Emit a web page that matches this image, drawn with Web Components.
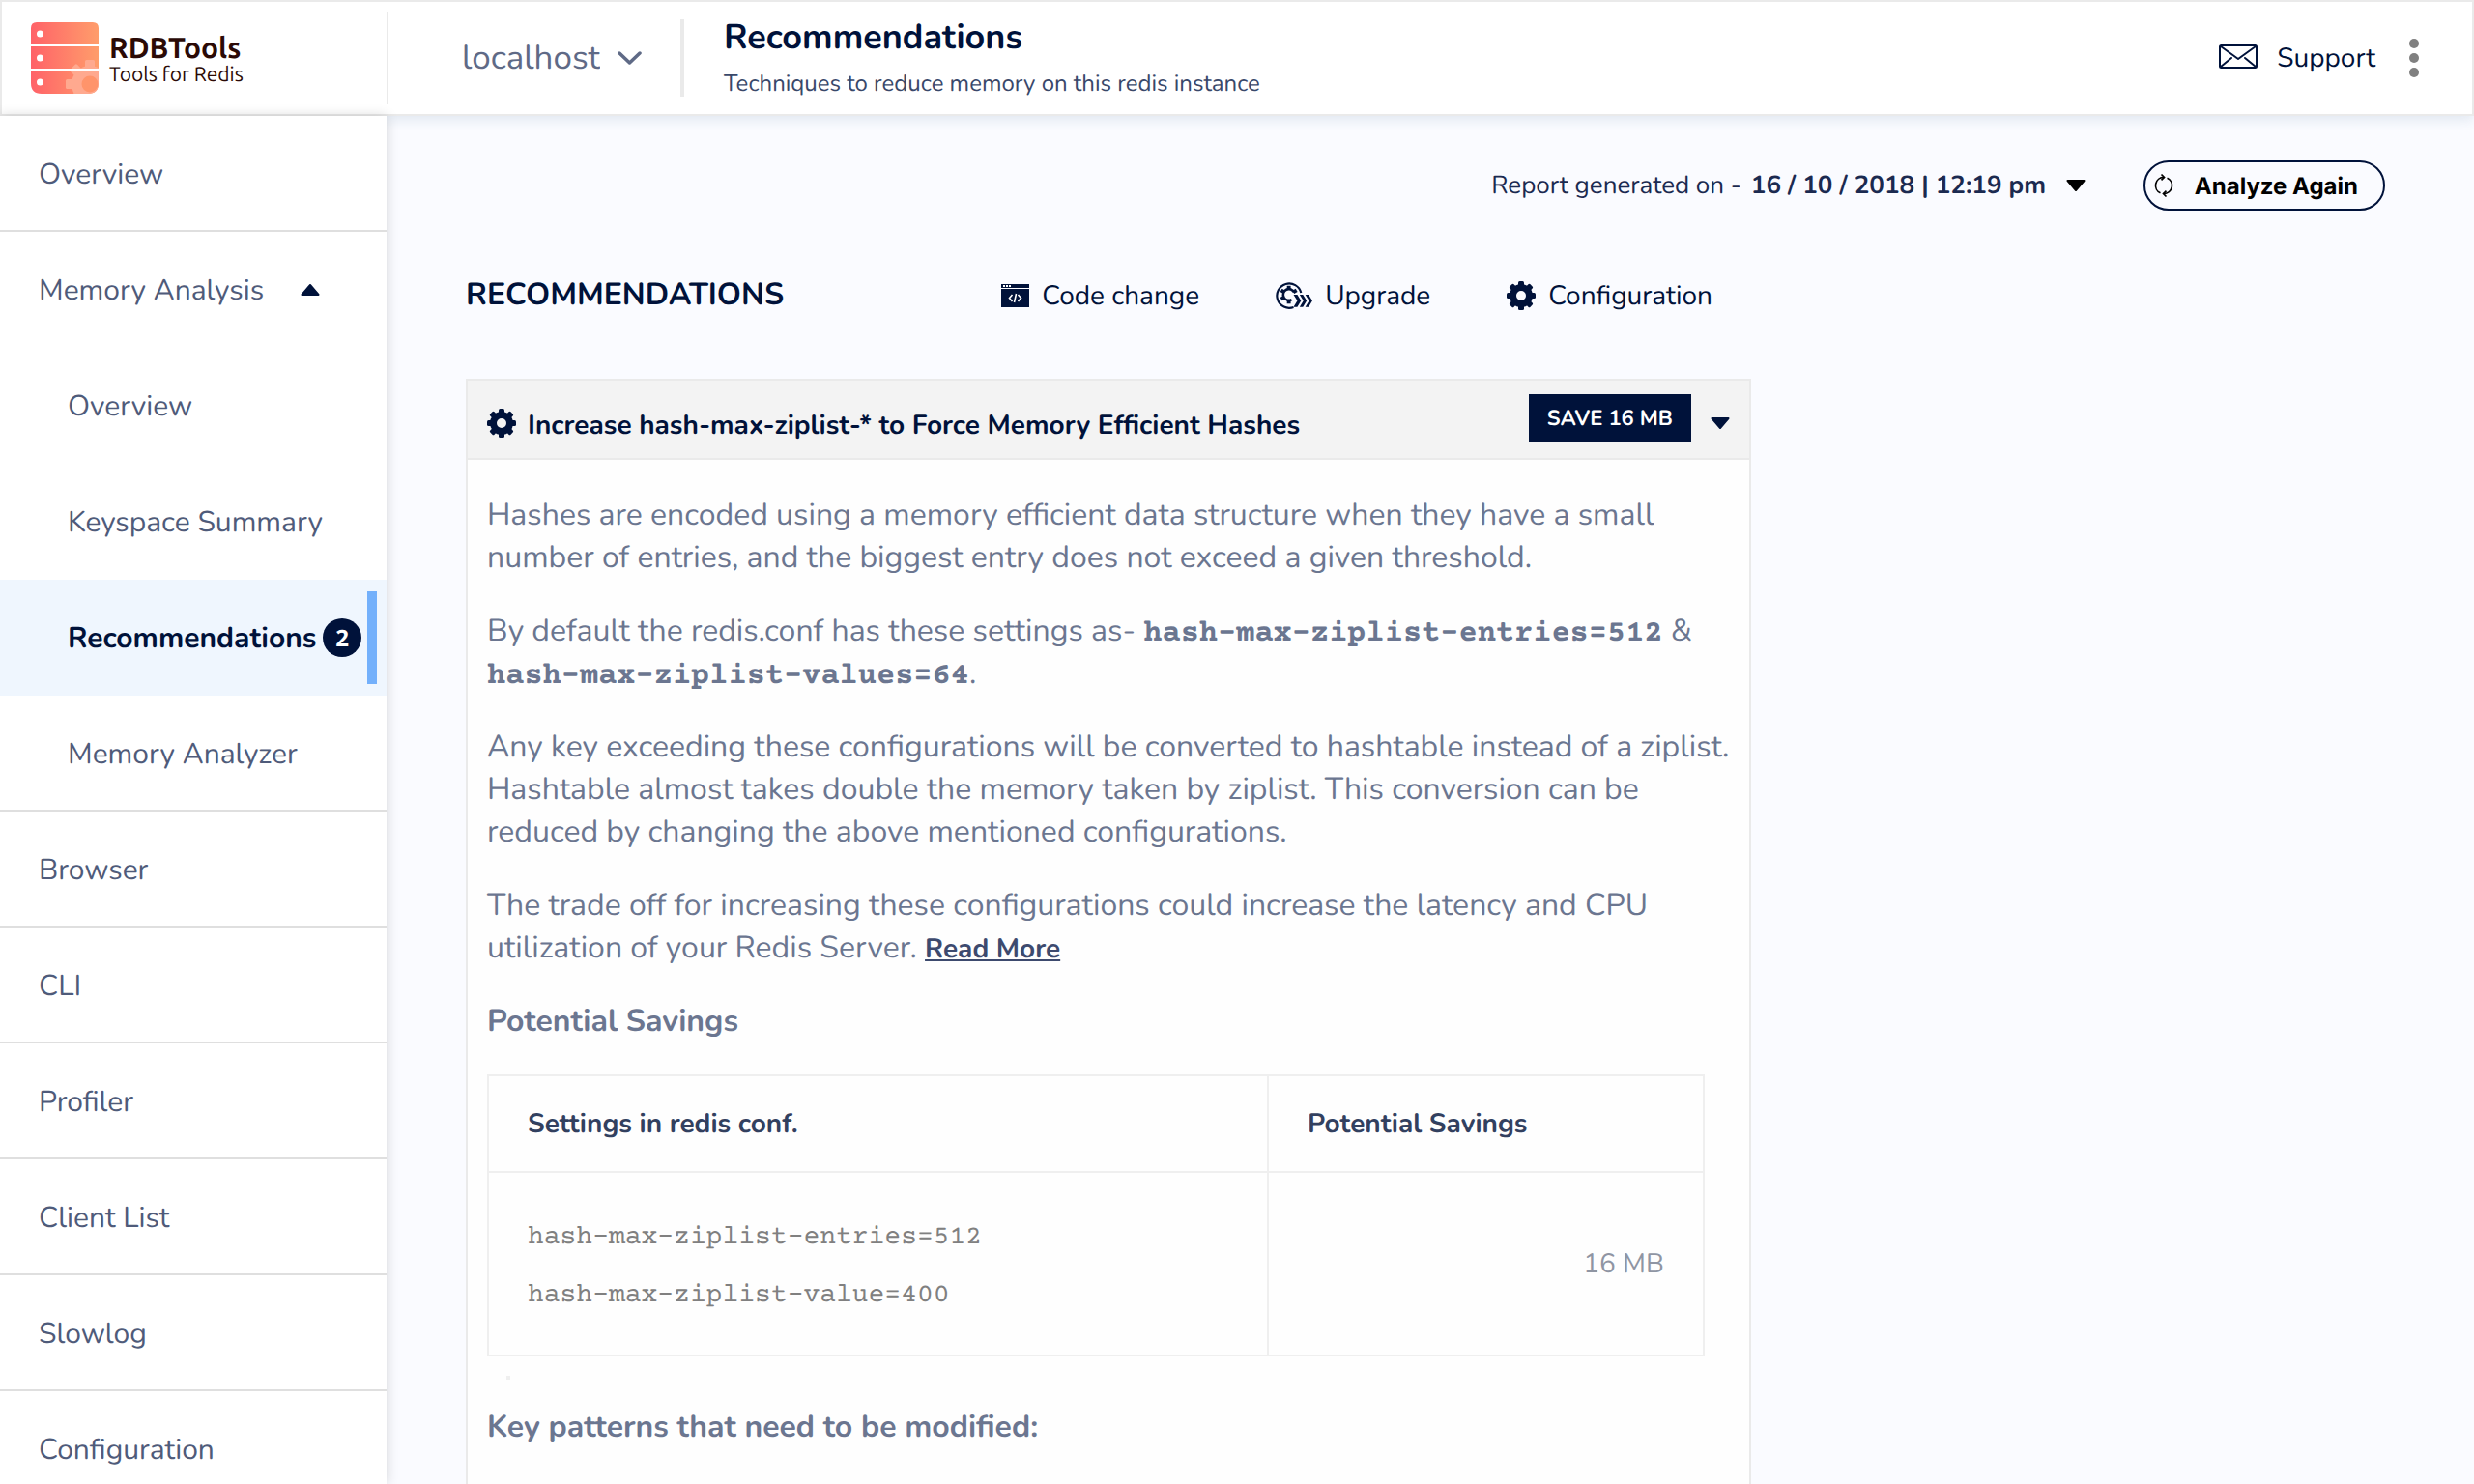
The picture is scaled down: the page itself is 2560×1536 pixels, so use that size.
<!DOCTYPE html>
<html lang="en">
<head>
<meta charset="utf-8">
<title>RDBTools - Recommendations</title>
<style>
  html, body { margin: 0; height: 100%; }
  body {
    --ink: #00123a;
    --text: #6b7690;
    --nav: #4f5b7a;
    --line: #eaeaea;
    --mono: "Courier Prime", "Nimbus Mono PS", "Liberation Mono", monospace;
    font-family: Nunito, Lato, sans-serif;
    font-size: 28px;
    text-rendering: geometricPrecision;
    color: var(--ink);
    background: #fafbff;
    overflow: hidden;
  }
</style>
</head>
<body>
<rdb-app>
  <rdb-header slot="header"></rdb-header>
  <rdb-sidebar slot="sidebar">
    <nav-item>Overview</nav-item>
    <nav-item expanded>Memory Analysis</nav-item>
    <nav-item sub>Overview</nav-item>
    <nav-item sub>Keyspace Summary</nav-item>
    <nav-item sub active count="2">Recommendations</nav-item>
    <nav-item sub last>Memory Analyzer</nav-item>
    <nav-item>Browser</nav-item>
    <nav-item>CLI</nav-item>
    <nav-item>Profiler</nav-item>
    <nav-item>Client List</nav-item>
    <nav-item>Slowlog</nav-item>
    <nav-item>Configuration</nav-item>
  </rdb-sidebar>
  <report-bar></report-bar>
  <page-heading>
    RECOMMENDATIONS
    <legend-item slot="legend" icon="code">Code change</legend-item>
    <legend-item slot="legend" icon="upgrade">Upgrade</legend-item>
    <legend-item slot="legend" icon="gear">Configuration</legend-item>
  </page-heading>
  <recommendation-card heading="Increase hash-max-ziplist-* to Force Memory Efficient Hashes" saving="SAVE 16 MB">
    <recommendation-text></recommendation-text>
    <savings-table></savings-table>
    <card-subtitle>Key patterns that need to be modified:</card-subtitle>
  </recommendation-card>
</rdb-app>

<script>
const teeth = (n, w, from, to) => Array.from({ length: n }, (_, i) =>
  `<rect x="${-w / 2}" y="${-to}" width="${w}" height="${to - from}" rx="1.5" transform="rotate(${i * 360 / n})"/>`).join('');

const ICONS = {
  gear: `<svg width="30" height="30" viewBox="-15 -15 30 30" fill="currentColor" aria-hidden="true">${teeth(8, 6, 9, 15)}<circle r="8.5" fill="none" stroke="currentColor" stroke-width="7"/></svg>`,
  code: `<svg width="29" height="24" viewBox="0 0 29 24" fill="currentColor" aria-hidden="true">
    <path d="M0 0h29v4H0zM0 5h29v19H0z"/>
    <g fill="#fff"><rect x="2" y="1" width="2" height="2"/><rect x="5" y="1" width="2" height="2"/><rect x="8" y="1" width="2" height="2"/></g>
    <path d="M11.500 11l-3 3.500 3 3.500M17.500 11l3 3.500-3 3.500M15.500 10l-2 9" fill="none" stroke="#fff" stroke-width="1.600"/></svg>`,
  upgrade: `<svg width="38" height="30" viewBox="0 0 39 30" aria-hidden="true">
    <path d="M27 12A13 13 0 1 0 19 27.300" fill="none" stroke="currentColor" stroke-width="2.200"/>
    <g transform="translate(14 14)"><g fill="currentColor">
      <rect x="-2" y="-9.500" width="4" height="4"/><rect x="-2" y="-9.500" width="4" height="4" transform="rotate(-60)"/><rect x="-2" y="-9.500" width="4" height="4" transform="rotate(-120)"/><rect x="-2" y="-9.500" width="4" height="4" transform="rotate(180)"/><rect x="-2" y="-9.500" width="4" height="4" transform="rotate(60)"/></g>
      <path d="M5.500 -2.500A6 6 0 1 0 3 5.200" fill="none" stroke="currentColor" stroke-width="2.600"/></g>
    <path d="M19 14h4l4 6.500-4 6.500h-4l4-6.500zM25.500 14h3.500l4 6.500-4 6.500h-3.500l4-6.500zM31.500 14H35l4 6.500-4 6.500h-3.500l4-6.500z" fill="currentColor"/></svg>`,
  down: `<svg width="20" height="12" viewBox="0 0 20 12" aria-hidden="true"><path d="M1.500 1h17L10 11z" fill="currentColor" stroke="currentColor" stroke-width="2" stroke-linejoin="round"/></svg>`,
  up: `<svg width="20" height="12" viewBox="0 0 20 12" aria-hidden="true"><path d="M1.500 11h17L10 1z" fill="currentColor" stroke="currentColor" stroke-width="2" stroke-linejoin="round"/></svg>`,
  chevron: `<svg width="25" height="14" viewBox="0 0 25 14" aria-hidden="true"><path d="M2 2l10.500 10L23 2" fill="none" stroke="currentColor" stroke-width="3.500" stroke-linecap="round" stroke-linejoin="round"/></svg>`,
  mail: `<svg width="40" height="28" viewBox="0 0 40 28" fill="none" stroke="currentColor" stroke-width="2" stroke-linejoin="round" stroke-linecap="round" aria-hidden="true"><rect x="1" y="1" width="38" height="23" rx="1.500"/><path d="M2 2l18 13L38 2M2 23l11-9M38 23l-11-9"/></svg>`,
  dots: `<svg width="10" height="40" viewBox="0 0 10 40" fill="#808080" aria-hidden="true"><circle cx="5" cy="5" r="5"/><circle cx="5" cy="20" r="5"/><circle cx="5" cy="35" r="5"/></svg>`,
  refresh: `<svg width="22" height="26" viewBox="0 0 22 26" fill="none" stroke="currentColor" stroke-width="1.700" aria-hidden="true"><path d="M7.500 20.800A8.600 8.600 0 0 1 11 4.400M14.500 5.200A8.600 8.600 0 0 1 11 21.600"/><path d="M8.500 1.500L11.500 4.400 8.500 7.300M13.500 18.700L10.500 21.600 13.500 24.500"/></svg>`,
  logo: `<svg width="70" height="74" viewBox="0 0 70 74" aria-hidden="true">
    <defs><linearGradient id="g" x1="0" x2="1"><stop offset="0" stop-color="#ff6268"/><stop offset="1" stop-color="#ff9d6b"/></linearGradient>
    <clipPath id="c"><path d="M6 0h58q6 0 6 6v17H0V6q0-6 6-6zM0 25h70v23H0zM0 50h70v13q0 11-11 11H11Q0 74 0 63z"/></clipPath></defs>
    <g clip-path="url(#c)"><rect width="70" height="74" fill="url(#g)"/>
    <g transform="translate(61 64)" fill="#ffa98f">${teeth(8, 10, 14, 25)}<circle r="19"/></g><circle cx="61" cy="64" r="8.500" fill="#ff946b"/></g>
    <g fill="#fff"><circle cx="9.500" cy="12" r="3.500"/><circle cx="9.500" cy="37" r="3.500"/><circle cx="9.500" cy="62" r="3.500"/></g></svg>`
};

function define(name, render) {
  customElements.define(name, class extends HTMLElement {
    constructor() {
      super();
      this.attachShadow({ mode: 'open' });
    }
    connectedCallback() {
      this.shadowRoot.innerHTML = '<style>*{box-sizing:border-box} svg{display:block;flex:none} select,button{text-rendering:inherit}</style>' + render(this);
    }
  });
}

define('rdb-app', () => `
  <style>
    :host { display: grid; grid-template: 120px 1fr / 400px 1fr; height: 100vh; }
    header { grid-column: 1 / -1; }
    main { display: flex; flex-direction: column; align-items: flex-start; padding: 46px 92px 0 82px; min-width: 0; overflow: hidden; }
    header { position: relative; box-shadow: 0 4px 12px rgba(40, 90, 130, .12); }
    aside { position: relative; z-index: 1; box-shadow: 0 0 12px rgba(0, 0, 0, .16); min-height: 0; }
  </style>
  <header><slot name="header"></slot></header>
  <aside><slot name="sidebar"></slot></aside>
  <main><slot></slot></main>`);

define('rdb-header', () => `
  <style>
    :host { display: flex; align-items: center; height: 120px; box-sizing: border-box; background: #fff; border: 2px solid var(--line); }
    .brand { display: flex; align-items: center; gap: 11px; width: 400px; height: 96px; padding-left: 30px; border-right: 2px solid var(--line); color: #2b0a06; text-decoration: none; font-family: Ubuntu, "Open Sans", sans-serif; }
    .brand span { display: grid; }
    .brand b { font-size: 30px; line-height: 32px; }
    .brand small { font-size: 21px; line-height: 22px; }
    .host { display: flex; align-items: center; gap: 18px; padding: 0 40px 0 76px; height: 80px; border-right: 4px solid var(--line); color: #5f6a86; }
    select { appearance: none; border: 0; padding: 0; margin: 0; background: none; font: inherit; font-size: 35px; color: inherit; }
    .title { padding-left: 41px; flex: 1; }
    h1 { margin: 0 0 10px; font-size: 36px; line-height: 44px; }
    p { margin: 0; font-size: 24px; line-height: 32px; color: #39486a; }
    .support { display: flex; align-items: center; gap: 20px; color: inherit; text-decoration: none; margin-right: 35px; }
    button { border: 0; background: none; padding: 0; margin-right: 55px; }
  </style>
  <a class="brand" href="#">${ICONS.logo}<span><b>RDBTools</b><small>Tools for Redis</small></span></a>
  <div class="host"><select aria-label="Redis instance"><option>localhost</option></select>${ICONS.chevron}</div>
  <div class="title"><h1>Recommendations</h1><p>Techniques to reduce memory on this redis instance</p></div>
  <a class="support" href="#">${ICONS.mail}<span>Support</span></a>
  <button aria-label="More options">${ICONS.dots}</button>`);

define('rdb-sidebar', () => `
  <style>:host { display: flex; flex-direction: column; height: 100%; background: #fff; overflow: hidden; }</style>
  <slot></slot>`);

define('nav-item', el => `
  <style>
    :host { display: block; flex: none; }
    a { display: flex; align-items: center; height: 120px; padding: 2px 20px 0 40px; border-bottom: 2px solid #dfdfdf; color: var(--nav); font-size: 30px; text-decoration: none; }
    :host([expanded]) a, :host([sub]) a { border-bottom-color: transparent; }
    :host([last]) a { border-bottom-color: #dfdfdf; }
    :host([sub]) a { padding-left: 70px; }
    :host([active]) a { background: #eff6fe; border: 0; color: var(--ink); font-weight: 700; padding-top: 0; padding-right: 10px; }
    svg { margin-left: 38px; color: var(--ink); }
    .count { display: grid; place-items: center; width: 40px; height: 40px; border-radius: 50%; background: var(--ink); color: #fff; font: 700 24px "Open Sans", sans-serif; margin-left: auto; margin-right: 6px; }
    .bar { width: 10px; height: 96px; background: #73b0fb; }
  </style>
  <a href="#"><slot></slot>${el.hasAttribute('expanded') ? ICONS.up : ''}${el.hasAttribute('active') ? `<span class="count">${el.getAttribute('count')}</span><span class="bar"></span>` : ''}</a>`);

define('report-bar', () => `
  <style>
    :host { display: flex; align-items: center; justify-content: flex-end; align-self: stretch; gap: 60px; height: 52px; color: #1b2a50; font-size: 26px; }
    label { display: flex; align-items: center; gap: 10px; }
    .date { display: flex; align-items: center; gap: 20px; }
    .date svg { color: #000; }
    select { appearance: none; border: 0; padding: 0; margin: 0; background: none; font: inherit; font-weight: 700; color: inherit; }
    button { display: flex; align-items: center; gap: 21px; height: 52px; padding: 0 26px 0 8px; border: 2px solid var(--ink); border-radius: 26px; background: none; color: #000; font: 700 24px Inter, sans-serif; }
  </style>
  <label><span>Report generated on -</span><span class="date"><select><option>16 / 10 / 2018 | 12:19 pm</option></select>${ICONS.down}</span></label>
  <button>${ICONS.refresh}Analyze Again</button>`);

define('page-heading', () => `
  <style>
    :host { display: flex; align-items: center; justify-content: space-between; width: 100%; max-width: 1330px; margin-top: 66px; height: 44px; }
    h2 { margin: 0; font-size: 32px; font-weight: 700; }
    div { display: flex; gap: 79px; padding-right: 40px; }
  </style>
  <h2><slot></slot></h2><div><slot name="legend"></slot></div>`);

define('legend-item', el => `
  <style>:host { display: flex; align-items: center; gap: 13px; }</style>
  ${ICONS[el.getAttribute('icon')]}<span><slot></slot></span>`);

define('recommendation-card', el => `
  <style>
    :host { display: block; width: 100%; max-width: 1330px; box-sizing: border-box; margin-top: 65px; border: 2px solid var(--line); background: #fefefe; min-height: 1200px; }
    header { display: flex; align-items: center; height: 82px; padding: 8px 20px 0; background: #f3f3f3; border-bottom: 2px solid var(--line); }
    h3 { flex: 1; margin: 0 0 0 12px; padding-top: 4px; font-size: 28px; line-height: 40px; }
    .save { display: block; align-self: flex-start; margin-top: 6px; height: 50px; line-height: 50px; padding: 0 19px; background: var(--ink); color: #fff; font-size: 22px; font-weight: 700; }
    button { border: 0; padding: 0; margin: 0 0 0 20px; background: none; color: inherit; }
    section { padding: 36px 20px; }
  </style>
  <header>${ICONS.gear}<h3>${el.getAttribute('heading')}</h3><span class="save">${el.getAttribute('saving')}</span><button aria-label="Collapse">${ICONS.down}</button></header>
  <section><slot></slot></section>`);

define('recommendation-text', () => `
  <style>
    :host { display: block; font-size: 32px; line-height: 44px; color: var(--text); }
    p { margin: 0 0 32px; }
    code { font-family: var(--mono); font-weight: 700; font-size: 32px; line-height: 1; }
    a { color: #3d4a6e; font-size: 28px; font-weight: 700; }
    h4 { margin: 0 0 32px; font-size: 32px; }
  </style>
  <p>Hashes are encoded using a memory efficient data structure when they have a small number of entries, and the biggest entry does not exceed a given threshold.</p>
  <p>By default the redis.conf has these settings as- <code>hash-max-ziplist-entries=512</code> &amp; <code>hash-max-ziplist-values=64</code>.</p>
  <p>Any key exceeding these configurations will be converted to hashtable instead of a ziplist. Hashtable almost takes double the memory taken by ziplist. This conversion can be reduced by changing the above mentioned configurations.</p>
  <p>The trade off for increasing these configurations could increase the latency and CPU utilization of your Redis Server. <a href="#">Read More</a></p>
  <h4>Potential Savings</h4>`);

define('savings-table', () => `
  <style>
    :host { display: block; margin-right: 26px; }
    table { width: 100%; border-collapse: collapse; table-layout: fixed; color: #808080; }
    th, td { border: 2px solid #efefef; padding: 0 40px; text-align: left; }
    th { height: 100px; color: #32405f; font-weight: 700; }
    td { height: 190px; }
    th:last-child { width: 451px; }
    td:first-child { padding-top: 6px; }
    td:last-child { text-align: right; color: #8f95a3; }
    code { display: block; font: 28px/60px var(--mono); }
    hr { width: 4px; height: 4px; margin: 20px 0 0 20px; border: 0; background: #efefef; }
  </style>
  <table>
    <thead><tr><th scope="col">Settings in redis conf.</th><th scope="col">Potential Savings</th></tr></thead>
    <tbody><tr><td><code>hash-max-ziplist-entries=512</code><code>hash-max-ziplist-value=400</code></td><td>16 MB</td></tr></tbody>
  </table>
  <hr>`);

define('card-subtitle', () => `
  <style>:host { display: block; margin-top: 28px; } h4 { margin: 0; font-size: 32px; line-height: 44px; color: var(--text); }</style>
  <h4><slot></slot></h4>`);
</script>
</body>
</html>
